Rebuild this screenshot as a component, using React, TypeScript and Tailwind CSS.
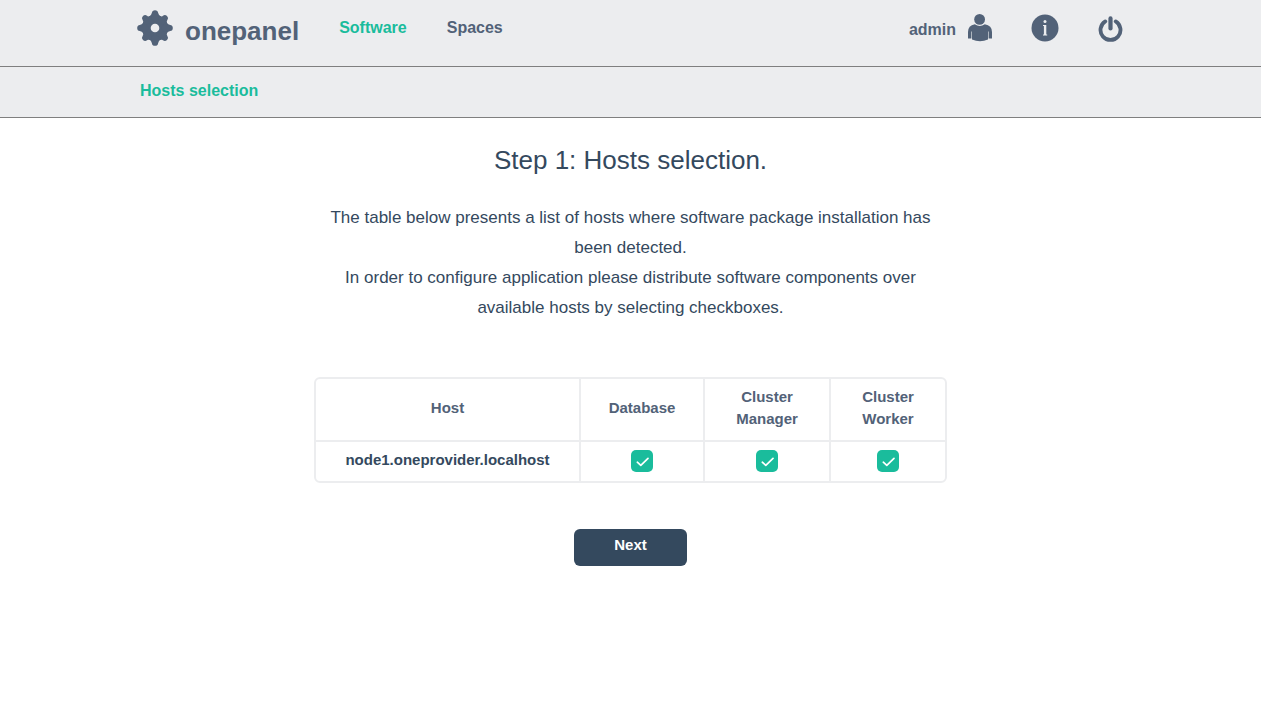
import { useState } from "react";

const GEAR_ANGLES = [0, 90, 180, 270];

function GearIcon() {
  return (
    <svg viewBox="0 0 36 36" className="size-9" fill="currentColor" aria-hidden="true">
      <mask id="gear-hole">
        <rect width="36" height="36" fill="white" />
        <circle cx="18" cy="18" r="4.3" fill="black" />
      </mask>
      <g mask="url(#gear-hole)">
        <circle cx="18" cy="18" r="13" />
        {GEAR_ANGLES.map((angle) => (
          <g key={angle} transform={`rotate(${angle} 18 18)`}>
            <path d="M11.5 7 Q14.6 5.6 14.9 2.8 Q15.2 0.2 18 0.2 Q20.8 0.2 21.1 2.8 Q21.4 5.6 24.5 7 L18 12 Z" />
            <path
              transform="rotate(45 18 18)"
              d="M12 7 Q14.8 5.8 14.9 3.6 Q15.2 1 18 1 Q20.8 1 21.1 3.6 Q21.2 5.8 24 7 L18 12 Z"
            />
          </g>
        ))}
      </g>
    </svg>
  );
}

function UserIcon() {
  return (
    <svg viewBox="0 0 24 28" className="h-7 w-6" fill="currentColor" aria-hidden="true">
      <circle cx="11.6" cy="5.4" r="5.4" />
      <path d="M6.8 10.2 Q11.8 13.6 16.8 10.2 Q24 11.4 24 18 V24.4 H20.6 V17.5 H20 V25.6 Q12 28.8 4 25.6 V17.5 H3.4 V24.4 H0 V18 Q0 11.4 6.8 10.2 Z" />
    </svg>
  );
}

function InfoIcon() {
  return (
    <svg viewBox="0 0 28 28" className="size-7" aria-hidden="true">
      <circle cx="14" cy="14" r="13.5" fill="currentColor" />
      <circle cx="14" cy="7.6" r="1.5" fill="#ecedef" />
      <path d="M12 11 H15.3 V20.5 H16.2 V21.6 H12 V20.5 H12.9 V12 H12 Z" fill="#ecedef" />
    </svg>
  );
}

function PowerIcon() {
  return (
    <svg viewBox="0 0 26 26" className="size-[26px]" fill="none" stroke="currentColor" strokeLinecap="round" aria-hidden="true">
      <path d="M12.5 2.4 V12.5" strokeWidth="4.2" />
      <path d="M7.3 5.4 A10 10 0 1 0 17.7 5.4" strokeWidth="3.8" />
    </svg>
  );
}

const COMPONENTS = ["Database", "Cluster Manager", "Cluster Worker"];

function HostsTable() {
  const [selected, setSelected] = useState([true, true, true]);
  const toggle = (index: number) =>
    setSelected(selected.map((value, i) => (i === index ? !value : value)));

  return (
    <div className="mt-[54px] w-full overflow-hidden rounded-md border-2 border-[#ecedef]">
      <table className="w-full table-fixed border-collapse text-[15px] leading-[22px]">
        <colgroup>
          <col />
          <col className="w-[124px]" />
          <col className="w-[126px]" />
          <col className="w-[115px]" />
        </colgroup>
        <thead>
          <tr className="h-[62px] text-[#526278]">
            <th scope="col" className="pb-1">Host</th>
            {COMPONENTS.map((name) => (
              <th key={name} scope="col" className="border-l-2 border-[#ecedef] px-5 pb-1">
                {name}
              </th>
            ))}
          </tr>
        </thead>
        <tbody>
          <tr className="h-10 border-t-2 border-[#ecedef]">
            <th scope="row" className="pb-1">node1.oneprovider.localhost</th>
            {COMPONENTS.map((name, index) => (
              <td key={name} className="border-l-2 border-[#ecedef] pb-[2px]">
                <label className="mx-auto grid size-[22px] cursor-pointer">
                  <input
                    type="checkbox"
                    aria-label={name}
                    checked={selected[index]}
                    onChange={() => toggle(index)}
                    className="col-start-1 row-start-1 size-[22px] appearance-none rounded-[5px] bg-[#bdc3c7] checked:bg-[#1abc9c]"
                  />
                  <svg viewBox="0 0 22 22" className="pointer-events-none col-start-1 row-start-1 size-[22px]" fill="none" stroke="white" strokeWidth="1.7" strokeLinecap="round" strokeLinejoin="round" aria-hidden="true">
                    <path d="M6.3 12.2 L9.8 15.4 L17 8.4" />
                  </svg>
                </label>
              </td>
            ))}
          </tr>
        </tbody>
      </table>
    </div>
  );
}

export default function App() {
  return (
    <div className="min-h-screen bg-white font-['Liberation_Sans',Arial,sans-serif] text-[#34495e]">
      <header className="bg-[#ecedef] font-bold">
        <div className="border-b border-[#7f7f7f]">
          <div className="mx-auto flex h-[66px] max-w-[987px] items-start text-[#526278]">
            <a href="#home" className="flex items-start gap-3 pt-[10px]">
              <GearIcon />
              <span className="pt-1 text-[26px] leading-[34px]">onepanel</span>
            </a>
            <nav className="flex gap-10 pt-4 pl-10 text-base leading-6">
              <a href="#software" className="text-[#1abc9c]">Software</a>
              <a href="#spaces">Spaces</a>
            </nav>
            <div className="ml-auto flex items-start pt-[14px]">
              <a href="#account" className="flex gap-3 text-base leading-8">
                admin
                <UserIcon />
              </a>
              <button type="button" aria-label="About" className="ml-[39px]"><InfoIcon /></button>
              <button type="button" aria-label="Log out" className="ml-[39px] pt-[2px]"><PowerIcon /></button>
            </div>
          </div>
        </div>
        <div className="border-b border-[#7f7f7f]">
          <nav className="mx-auto h-[50px] max-w-[981px] pt-3 text-base leading-6">
            <a href="#hosts" className="text-[#1abc9c]">Hosts selection</a>
          </nav>
        </div>
      </header>
      <main className="mx-auto flex max-w-[633px] flex-col items-center pt-6 pb-10 text-center">
        <h1 className="text-[26px] leading-9">Step 1: Hosts selection.</h1>
        <p className="mt-[25px] text-[17px] leading-[30px]">
          The table below presents a list of hosts where software package installation has been detected.
          <br />
          In order to configure application please distribute software components over available hosts by
          selecting checkboxes.
        </p>
        <HostsTable />
        <button type="button" className="mt-[46px] h-[37px] w-[113px] rounded-md bg-[#34495e] pb-1 text-[15px] font-bold text-white">
          Next
        </button>
      </main>
    </div>
  );
}
